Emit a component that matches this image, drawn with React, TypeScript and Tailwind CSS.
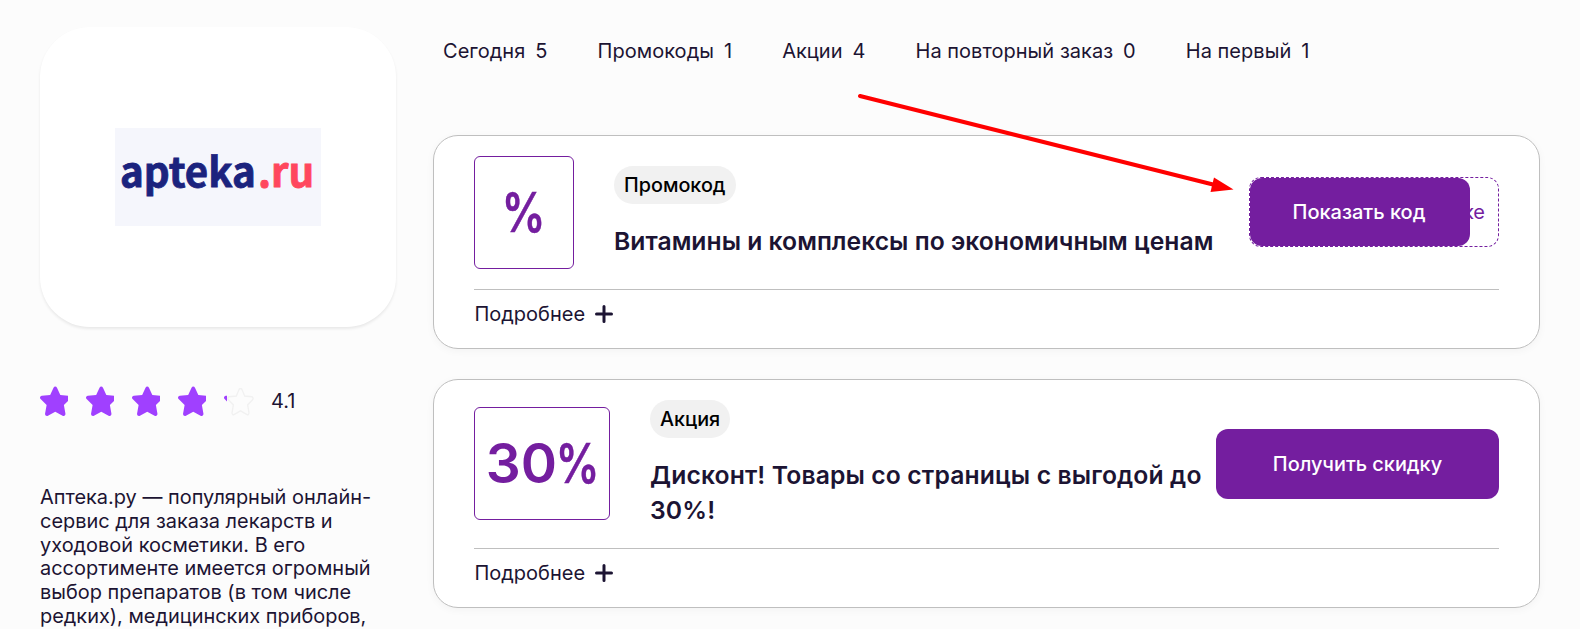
import { useState } from "react";

type Offer = {
  id: number;
  kind: string;
  amount?: string;
  title: string;
  action: string;
  code?: string;
};

const filters = [
  { label: "Сегодня", count: 5 },
  { label: "Промокоды", count: 1 },
  { label: "Акции", count: 4 },
  { label: "На повторный заказ", count: 0 },
  { label: "На первый", count: 1 },
];

const offers: Offer[] = [
  {
    id: 1,
    kind: "Промокод",
    title: "Витамины и комплексы по экономичным ценам",
    action: "Показать код",
    code: "ке",
  },
  {
    id: 2,
    kind: "Акция",
    amount: "30",
    title: "Дисконт! Товары со страницы с выгодой до 30%!",
    action: "Получить скидку",
  },
];

const starPath =
  "M14.3 1.6c.8-1.5 2.6-1.5 3.4 0l3.3 7.2 8.2.9c1.7.2 2.4 2 1.2 3.2l-5.9 5.7 1.5 8.5c.3 1.7-1.3 2.9-2.8 2.1L16 25.3l-7.2 3.9c-1.5.8-3.1-.4-2.8-2.1l1.5-8.5-5.9-5.7C.4 11.7 1.1 9.9 2.8 9.7l8.2-.9z";

function Star({ fill }: { fill: number }) {
  return (
    <span className="relative block h-8 w-[31px]">
      {fill < 1 && (
        <svg
          viewBox="0 0 32 32"
          preserveAspectRatio="none"
          className="absolute top-[2px] left-[2.5px] h-[29px] w-[27px]"
          fill="none"
          stroke="#f1f1f1"
          strokeWidth="1.6"
        >
          <path d={starPath} />
        </svg>
      )}
      <span className="absolute inset-y-0 left-0 overflow-hidden" style={{ width: fill * 28 }}>
        <svg viewBox="0 0 32 32" className="mt-[0.4px] -ml-[0.9px] h-[32.5px] w-[32.5px] max-w-none" fill="#a040ff">
          <path d={starPath} />
        </svg>
      </span>
    </span>
  );
}

function Plus() {
  return (
    <svg viewBox="0 0 18 18" className="h-[18px] w-[18px]" stroke="#1c1433" strokeWidth="3" strokeLinecap="round">
      <path d="M9 1.5v15M1.5 9h15" />
    </svg>
  );
}

function OfferButton({ offer }: { offer: Offer }) {
  if (!offer.code) {
    return (
      <button className="h-[70px] w-[283px] shrink-0 rounded-xl bg-[#741e9f] pt-0.5 text-[19.9px] font-medium text-white">
        {offer.action}
      </button>
    );
  }

  return (
    <button className="relative mb-px flex h-[70px] w-[250px] shrink-0 items-center justify-end rounded-xl border border-dashed border-[#741e9f] pt-0.5 pr-[13px] text-[#741e9f]">
      {offer.code}
      <span className="absolute inset-y-0 left-0 flex w-[220px] items-center justify-center rounded-xl bg-[#741e9f] pt-0.5 pr-0.5 font-medium text-white">
        {offer.action}
      </span>
    </button>
  );
}

function OfferCard({ offer }: { offer: Offer }) {
  const [open, setOpen] = useState(false);

  return (
    <article className="rounded-[25px] border border-[#bfbfbf] bg-white px-10 pt-5 shadow-[0_2px_8px_rgba(0,0,0,0.04)]">
      <div className="flex items-center">
        <div
          className={`flex h-[113px] shrink-0 items-center justify-center rounded-md border border-[#741e9f] text-[55px] font-semibold text-[#741e9f] ${offer.amount ? "w-[136px]" : "w-[100px]"}`}
        >
          {offer.amount}
          <span className="-mx-[7px] inline-block scale-x-[0.79] [-webkit-text-stroke:0.5px]">%</span>
        </div>
        <div className="ml-10 min-w-0 flex-1">
          <span className="flex h-[38px] w-fit items-center rounded-full bg-[#f1f1f1] px-2.5 pt-px text-[19.8px] font-medium text-black">
            {offer.kind}
          </span>
          <h2 className={`mt-5 text-[24.7px] leading-[34.9px] font-semibold ${offer.code ? "tracking-[0.02px]" : "tracking-[0.13px]"}`}>
            {offer.title}
          </h2>
        </div>
        <OfferButton offer={offer} />
      </div>
      <div className="mt-5 h-[59px] border-t border-[#bfbfbf]">
        <button className="flex h-12 items-center gap-2.5 pl-[0.4px]" onClick={() => setOpen(!open)}>
          <span className="pt-[1.4px]">Подробнее</span>
          <Plus />
        </button>
      </div>
    </article>
  );
}

export default function App() {
  const rating = 4.1;

  return (
    <main className="relative flex h-[629px] w-[1580px] overflow-hidden bg-[#fcfcfc] pl-10 font-['Inter',sans-serif] text-[20px] leading-[23.8px] text-[#1c1433]">
      <aside className="w-[356px] shrink-0 pt-[27px]">
        <div className="flex h-[300px] items-center justify-center rounded-[50px] bg-white shadow-[0_2px_3px_rgba(0,0,0,0.08)]">
          <div className="flex h-[98px] w-[206px] bg-[#f5f6fc] pt-3 pl-[5px] font-['Noto_Sans_CJK_SC',sans-serif] text-[40.3px] leading-[60px] font-bold text-[#1b237e] [-webkit-text-stroke:0.8px]">
            apteka<span className="ml-0.5 text-[#ff475d]">.ru</span>
          </div>
        </div>
        <div className="mt-[59px] flex items-center gap-[15px]">
          {[0, 1, 2, 3, 4].map((i) => (
            <Star key={i} fill={Math.max(0, Math.min(1, rating - i))} />
          ))}
          <span className="pl-px">{rating}</span>
        </div>
        <p className="mt-[68px] w-[350px] text-[19.95px]">
          Аптека.ру — популярный онлайн-сервис для заказа лекарств и уходовой косметики. В его ассортименте имеется
          огромный выбор препаратов (в том числе редких), медицинских приборов,
        </p>
      </aside>

      <div className="ml-[37px] w-[1107px]">
        <nav className="flex h-[135px] gap-[50px] pt-10 pl-2.5 tracking-[0.03px]">
          {filters.map((item) => (
            <a key={item.label} className="flex gap-2.5">
              <span>{item.label}</span>
              <span>{item.count}</span>
            </a>
          ))}
        </nav>
        <div className="space-y-[30px]">
          {offers.map((offer) => (
            <OfferCard key={offer.id} offer={offer} />
          ))}
        </div>
      </div>

      {/* pointer to the promo code button */}
      <svg className="pointer-events-none absolute top-[90px] left-[855px] h-[105px] w-[385px]" viewBox="0 0 385 105">
        <path d="M5 6 358 94.5" stroke="#ff0000" strokeWidth="4" strokeLinecap="round" />
        <path d="M359 87.5 378.5 99.5 355.5 102z" fill="#ff0000" />
      </svg>
    </main>
  );
}
